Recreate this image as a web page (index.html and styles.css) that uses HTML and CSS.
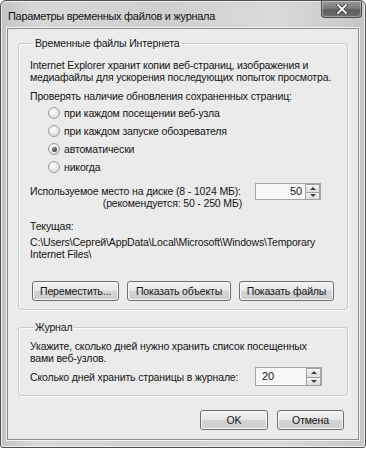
FILE: index.html
```html
<!DOCTYPE html>
<html lang="ru">
<head>
    <meta charset="UTF-8">
    <title>Параметры временных файлов и журнала</title>
    <link rel="stylesheet" href="styles.css">
</head>
<body>

<div class="window">
    <div class="titlebar">
        <span class="title">Параметры временных файлов и журнала</span>
        <span class="close">
            <svg width="12" height="10" viewBox="0 0 12 10">
                <path d="M2 1 L10 9 M10 1 L2 9" stroke="#3a3a3a" stroke-width="3.4" stroke-linecap="square"/>
                <path d="M2 1 L10 9 M10 1 L2 9" stroke="#ffffff" stroke-width="1.8" stroke-linecap="square"/>
            </svg>
        </span>
    </div>

    <div class="client">
        <fieldset class="group group-temp">
            <legend>Временные файлы Интернета</legend>
            <p class="desc">Internet Explorer хранит копии веб-страниц, изображения и<br>медиафайлы для ускорения последующих попыток просмотра.</p>
            <p class="check-label">Проверять наличие обновления сохраненных страниц:</p>
            <ul class="radios">
                <li><span class="radio"></span>при каждом посещении веб-узла</li>
                <li><span class="radio"></span>при каждом запуске обозревателя</li>
                <li><span class="radio checked"></span>автоматически</li>
                <li><span class="radio"></span>никогда</li>
            </ul>
            <div class="disk-row">
                <div class="disk-label">
                    <div>Используемое место на диске (8 - 1024 МБ):</div>
                    <div class="hint">(рекомендуется: 50 - 250 МБ)</div>
                </div>
                <div class="spin spin-disk">
                    <span class="spin-value right">50</span>
                    <span class="spin-btns">
                        <span class="spin-btn"><span class="arrow up"></span></span>
                        <span class="spin-btn"><span class="arrow down"></span></span>
                    </span>
                </div>
            </div>
            <p class="current">Текущая:</p>
            <p class="path">C:\Users\Сергей\AppData\Local\Microsoft\Windows\Temporary<br>Internet Files\</p>
            <div class="buttons">
                <button class="btn btn-move">Переместить...</button>
                <button class="btn btn-objects">Показать объекты</button>
                <button class="btn btn-files">Показать файлы</button>
            </div>
        </fieldset>

        <fieldset class="group group-history">
            <legend>Журнал</legend>
            <p class="desc">Укажите, сколько дней нужно хранить список посещенных<br>вами веб-узлов.</p>
            <div class="days-row">
                <span class="days-label">Сколько дней хранить страницы в журнале:</span>
                <div class="spin spin-days">
                    <span class="spin-value">20</span>
                    <span class="spin-btns">
                        <span class="spin-btn"><span class="arrow up"></span></span>
                        <span class="spin-btn"><span class="arrow down"></span></span>
                    </span>
                </div>
            </div>
        </fieldset>

        <div class="dialog-buttons">
            <button class="btn btn-ok">OK</button>
            <button class="btn btn-cancel">Отмена</button>
        </div>
    </div>
</div>

</body>
</html>
```

FILE: styles.css
```css
body {
    margin: 0;
    background-color: #ffffff;
    font-family: "Liberation Sans", Arial, sans-serif;
    font-size: 10.5px;
    letter-spacing: -0.15px;
    color: #151515;
    white-space: nowrap;
}
p {
    margin: 0;
}
.window {
    width: 364px;
    height: 446px;
    border: 1px solid #505050;
    border-radius: 6px 6px 3px 3px;
    background: linear-gradient(to right, #c4c4c4, #d8d8d8 10%, #cfcfcf 45%, #dadada 75%, #c6c6c6);
    box-shadow: inset 0 0 0 1px #eeeeee;
}
.titlebar {
    height: 27px;
    display: flex;
    justify-content: space-between;
    align-items: flex-start;
    padding-left: 7px;
}
.title {
    font-size: 11px;
    letter-spacing: -0.3px;
    line-height: 14px;
    margin-top: 8px;
    color: #121212;
}
.close {
    width: 39px;
    height: 16px;
    margin-right: 3px;
    border: 1px solid #4a4a4a;
    border-top: none;
    border-radius: 0 0 4px 4px;
    background: linear-gradient(to bottom, #9a9a9a, #7c7c7c 45%, #5e5e5e 55%, #6e6e6e);
    box-shadow: inset 0 0 0 1px rgba(255, 255, 255, 0.35);
    display: flex;
    justify-content: center;
    align-items: center;
}
.client {
    margin: 0 6px;
    height: 410px;
    border: 1px solid #8c8c8c;
    background-color: #ebebeb;
    box-shadow: 0 0 0 1px #f2f2f2;
    overflow: hidden;
}
.group {
    margin: 0 10px;
    padding: 0 0 0 11px;
    border: 1px solid #cdcdcd;
    border-radius: 3px;
    box-shadow: 1px 1px 0 #fafafa, inset 1px 1px 0 #fafafa;
}
.group legend {
    padding: 0 2px;
    margin-left: 3px;
    line-height: 12px;
}
.group-temp {
    margin-top: 8px;
    padding-top: 10px;
    padding-bottom: 8px;
}
.desc {
    line-height: 12px;
}
.check-label {
    margin-top: 7px;
    line-height: 12px;
}
.radios {
    list-style: none;
    margin: 2px 0 0 0;
    padding: 0 0 0 18px;
}
.radios li {
    height: 18px;
    line-height: 18px;
    display: flex;
    align-items: center;
}
.radio {
    width: 12px;
    height: 12px;
    border: 1px solid #9a9a9a;
    border-radius: 50%;
    background: radial-gradient(circle at 40% 35%, #ffffff, #e4e4e4 60%, #cacaca);
    margin-right: 4px;
    box-sizing: border-box;
    position: relative;
}
.radio.checked::after {
    content: "";
    position: absolute;
    left: 2.5px;
    top: 2.5px;
    width: 5px;
    height: 5px;
    border-radius: 50%;
    background: radial-gradient(circle at 40% 35%, #8a8a8a, #2a2a2a);
}
.disk-row {
    display: flex;
    align-items: flex-start;
    margin-top: 9px;
}
.disk-label {
    width: 212px;
    line-height: 12px;
}
.hint {
    text-align: right;
}
.spin {
    display: flex;
    border: 1px solid #a6a6a6;
    background-color: #f7f7f7;
    box-sizing: border-box;
}
.spin-disk {
    width: 66px;
    height: 17px;
    margin-left: 13px;
    margin-top: -2px;
}
.spin-value {
    flex: 1;
    line-height: 15px;
    font-size: 11px;
    padding: 0 4px 0 6px;
}
.spin-value.right {
    text-align: right;
}
.spin-btns {
    width: 14px;
    display: flex;
    flex-direction: column;
}
.spin-btn {
    flex: 1;
    border: 1px solid #a0a0a0;
    margin: 0 0 -1px -1px;
    background: linear-gradient(to bottom, #f6f6f6, #dcdcdc);
    display: flex;
    justify-content: center;
    align-items: center;
}
.arrow {
    width: 0;
    height: 0;
    border-left: 3px solid transparent;
    border-right: 3px solid transparent;
}
.arrow.up {
    border-bottom: 3px solid #3c3c3c;
}
.arrow.down {
    border-top: 3px solid #3c3c3c;
}
.current {
    margin-top: 11px;
    line-height: 12px;
}
.path {
    margin-top: 4px;
    line-height: 12px;
}
.buttons {
    display: flex;
    gap: 8px;
    margin-top: 21px;
    margin-left: 2px;
}
.btn {
    height: 20px;
    padding: 0;
    font-family: "Liberation Sans", Arial, sans-serif;
    font-size: 10.5px;
    letter-spacing: -0.15px;
    color: #151515;
    border: 1px solid #6e6e6e;
    border-radius: 3px;
    background: linear-gradient(to bottom, #f4f4f4, #e6e6e6 48%, #d4d4d4 52%, #cfcfcf);
    box-shadow: inset 0 0 0 1px #f8f8f8;
}
.btn-move {
    width: 87px;
}
.btn-objects {
    width: 104px;
}
.btn-files {
    width: 95px;
}
.group-history {
    margin-top: 11px;
    padding-top: 7px;
    padding-bottom: 9px;
}
.days-row {
    display: flex;
    align-items: center;
    margin-top: 3px;
    height: 19px;
}
.days-label {
    width: 225px;
}
.spin-days {
    width: 67px;
    height: 19px;
}
.spin-days .spin-value {
    line-height: 17px;
}
.dialog-buttons {
    display: flex;
    justify-content: flex-end;
    gap: 9px;
    margin-top: 14px;
    padding-right: 14px;
}
.btn-ok {
    width: 68px;
}
.btn-cancel {
    width: 67px;
}
```
